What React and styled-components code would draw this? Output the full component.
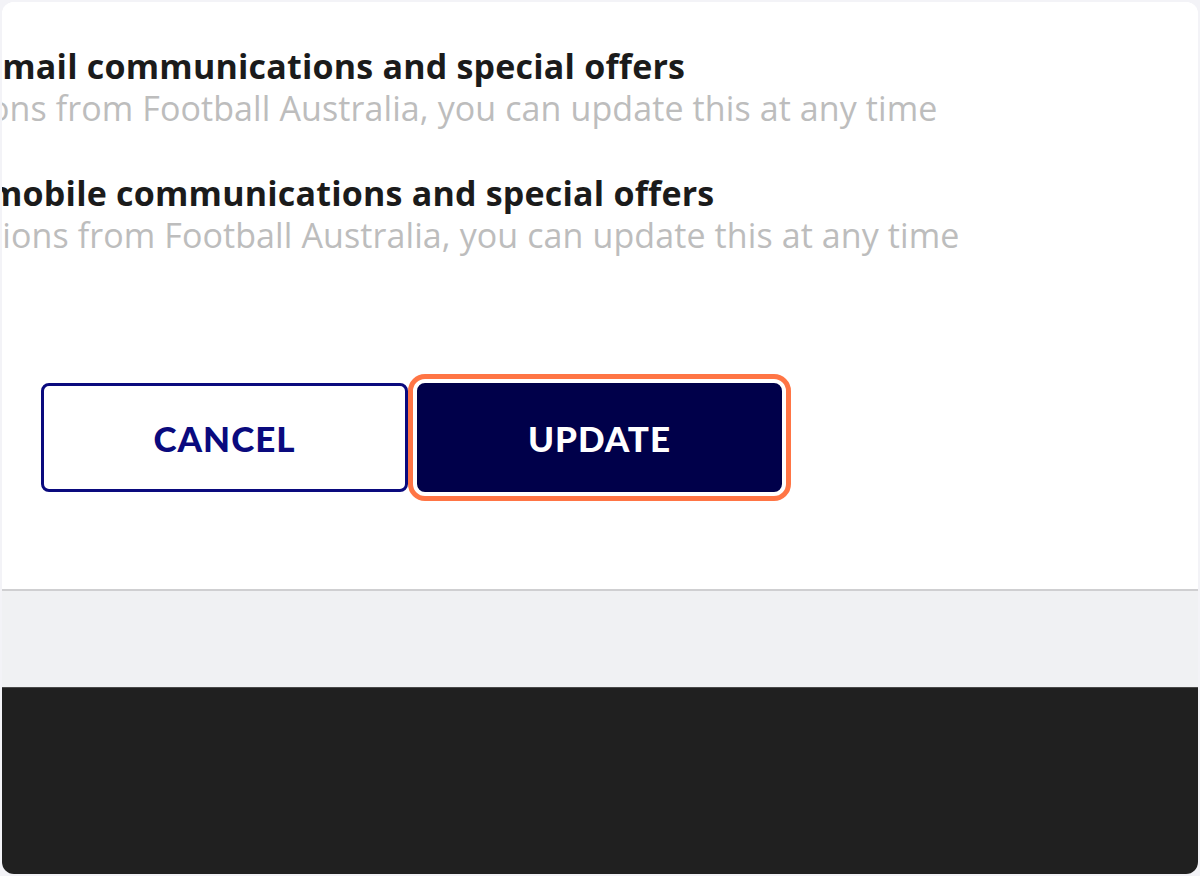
import React from "react";
import styled, { createGlobalStyle } from "styled-components";

const Global = createGlobalStyle`
  html, body {
    margin: 0;
    padding: 0;
    background: #f3f3f7;
  }
  body {
    font-family: "Open Sans", Lato, sans-serif;
  }
`;

const Frame = styled.div`
  margin: 2px;
  height: 872px;
  border-radius: 12px;
  overflow: hidden;
  display: flex;
  flex-direction: column;
  background: #ffffff;
`;

const Panel = styled.div`
  height: 589px;
  flex-shrink: 0;
  background: #ffffff;
  border-bottom: 2px solid #cfcfd1;
  overflow: hidden;
  padding-top: 43px;
  box-sizing: border-box;
`;

const Option = styled.div`
  margin-bottom: ${(p) => p.gap || 0}px;
`;

const Title = styled.div`
  font-size: 34px;
  font-weight: 700;
  line-height: 42px;
  letter-spacing: 0.2px;
  color: #1b1b1b;
  white-space: nowrap;
  margin-left: ${(p) => p.shift}px;
`;

const Note = styled.div`
  font-size: 34px;
  font-weight: 400;
  line-height: 42px;
  letter-spacing: 0.1px;
  color: #bdbdbd;
  white-space: nowrap;
  margin-left: ${(p) => p.shift}px;
`;

const Actions = styled.div`
  display: flex;
  gap: 9px;
  margin: 127px 0 0 39px;
`;

const Button = styled.button`
  width: ${(p) => p.w}px;
  height: 109px;
  box-sizing: border-box;
  border-radius: 8px;
  font-family: Lato, "Open Sans", sans-serif;
  font-size: 35px;
  font-weight: 900;
  letter-spacing: 1px;
  cursor: pointer;
  border: 3px solid #0a0a7e;
  background: ${(p) => (p.primary ? "#00004a" : "#ffffff")};
  color: ${(p) => (p.primary ? "#ffffff" : "#0a0a7e")};
  ${(p) => (p.primary ? "border-color: #00004a;" : "")}
  outline: ${(p) => (p.focused ? "5px solid #ff7545" : "none")};
  outline-offset: 4px;
`;

const Band = styled.div`
  height: 96px;
  flex-shrink: 0;
  background: #f0f1f3;
  border-bottom: 1px solid #4a4a4a;
`;

const Footer = styled.div`
  flex: 1;
  background: #202020;
`;

export default function App() {
  return (
    <>
      <Global />
      <Frame>
        <Panel>
          <Option gap={43}>
            <Title shift={-20}>email communications and special offers</Title>
            <Note shift={-152}>notifications from Football Australia, you can update this at any time</Note>
          </Option>
          <Option>
            <Title shift={-13}>mobile communications and special offers</Title>
            <Note shift={-130}>notifications from Football Australia, you can update this at any time</Note>
          </Option>
          <Actions>
            <Button w={367}>CANCEL</Button>
            <Button w={365} primary focused>
              UPDATE
            </Button>
          </Actions>
        </Panel>
        <Band />
        <Footer />
      </Frame>
    </>
  );
}
